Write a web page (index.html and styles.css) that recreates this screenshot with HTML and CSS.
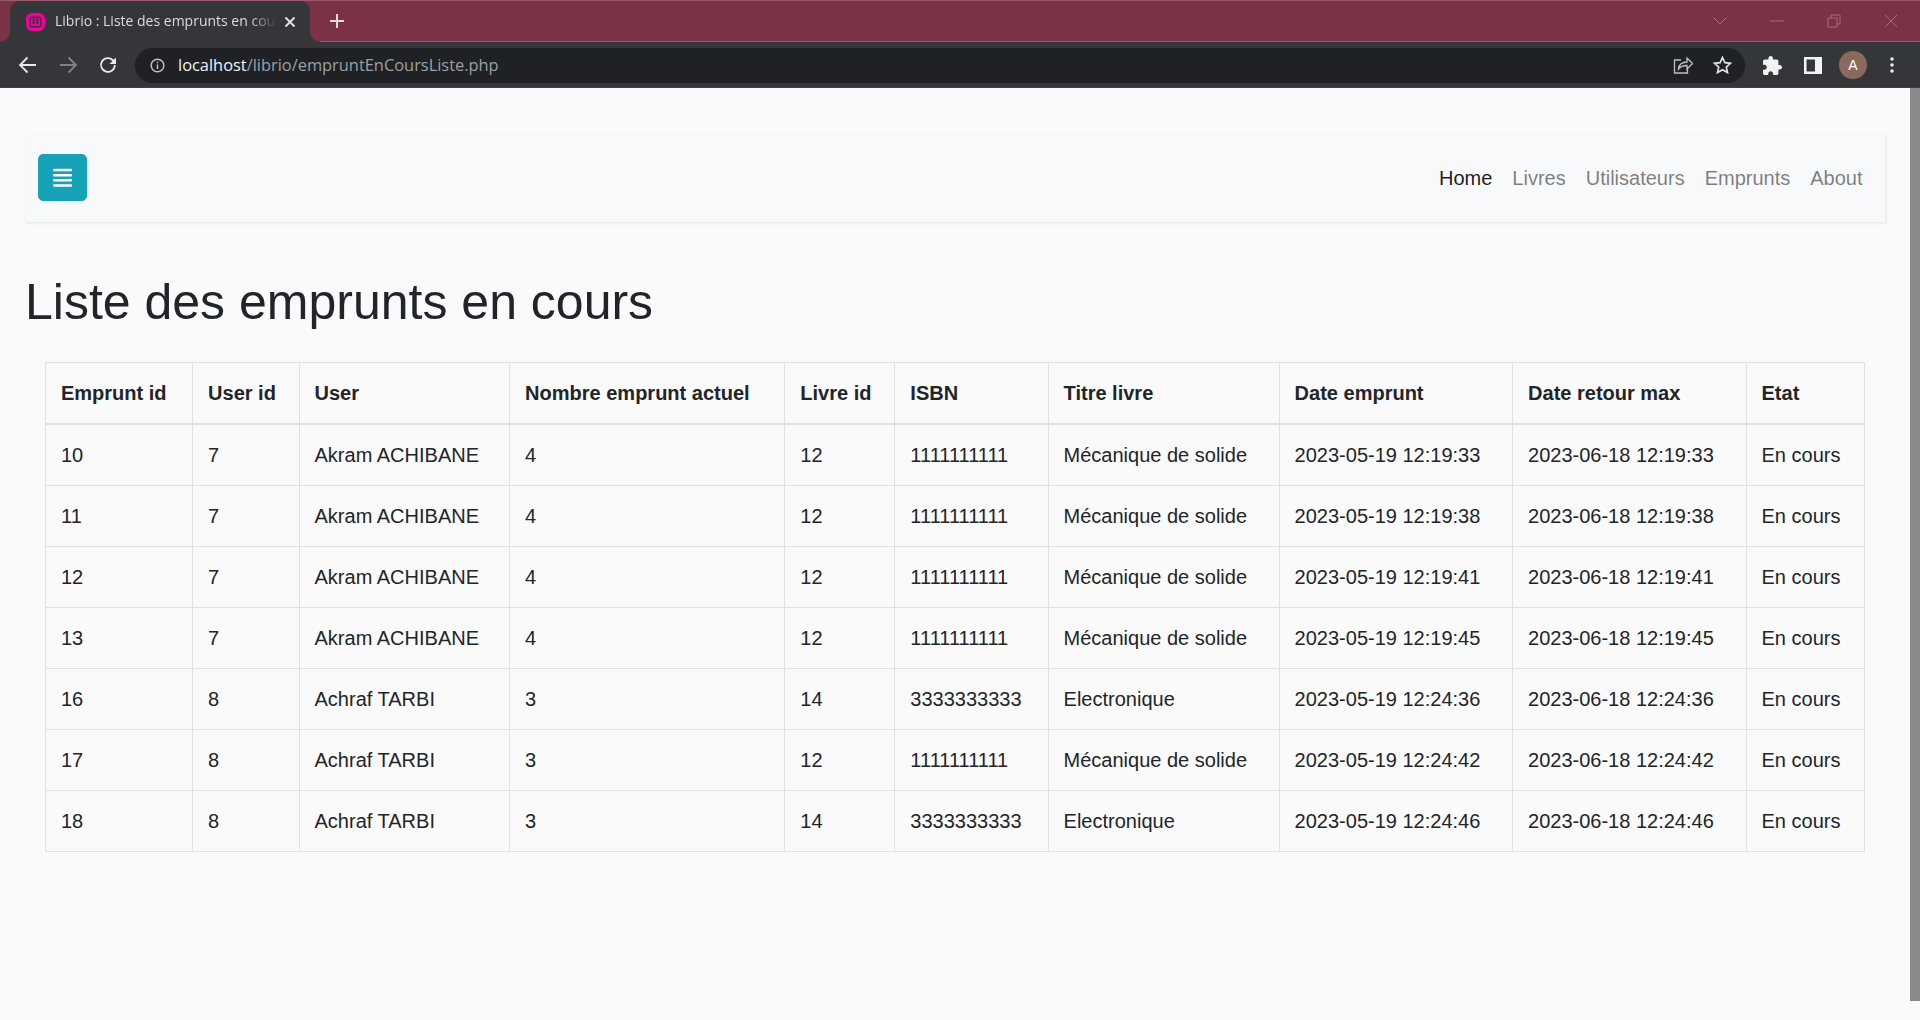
FILE: index.html
```html
<!doctype html>
<html lang="fr">
  <head>
    <meta charset="utf-8">
    <title>Librio : Liste des emprunts en cours</title>
    <link rel="stylesheet" href="styles.css">
  </head>

  <body>
    <div class="browser-top">
      <div class="tabbar">
        <div class="tab">
          <svg class="favicon" width="19" height="18" viewBox="0 0 19 18">
            <rect x="1.7" y="1.7" width="15.6" height="14.6" rx="4.5" fill="none" stroke="#f3009c" stroke-width="3.4"/>
            <path d="M5.8 5v7h7.400V5M9.500 5v7" fill="none" stroke="#f3009c" stroke-width="1.8"/>
          </svg>
          <span class="tab-title">Librio : Liste des emprunts en cou</span>
          <svg class="tab-close" width="12" height="12" viewBox="0 0 12 12">
            <path d="M1.5 1.5l9 9M10.5 1.5l-9 9" stroke="#e3e4e6" stroke-width="1.8"/>
          </svg>
        </div>
        <svg class="new-tab" width="16" height="16" viewBox="0 0 16 16">
          <path d="M8 1v14M1 8h14" stroke="#e8d8dc" stroke-width="2"/>
        </svg>
        <div class="window-controls">
          <svg width="14" height="10" viewBox="0 0 14 10"><path d="M1 2l6 6 6-6" fill="none" stroke="#a66d7d" stroke-width="1"/></svg>
          <svg width="14" height="14" viewBox="0 0 14 14"><path d="M0 7h14" stroke="#a66d7d" stroke-width="1"/></svg>
          <svg width="14" height="14" viewBox="0 0 14 14"><path d="M1 4h9v9H1zM4 4V1h9v9h-3" fill="none" stroke="#a66d7d" stroke-width="1"/></svg>
          <svg width="14" height="14" viewBox="0 0 14 14"><path d="M1 1l12 12M13 1L1 13" stroke="#a66d7d" stroke-width="1"/></svg>
        </div>
      </div>

      <div class="toolbar">
        <svg width="18" height="18" viewBox="0 0 18 18"><path d="M17 9H1.500M8.500 1.500L1 9l7.500 7.500" fill="none" stroke="#e8eaed" stroke-width="1.8"/></svg>
        <svg width="18" height="18" viewBox="0 0 18 18"><path d="M1 9h15.500M9.500 1.500L17 9l-7.500 7.500" fill="none" stroke="#7f8184" stroke-width="1.8"/></svg>
        <svg width="18" height="18" viewBox="0 0 18 18"><path d="M15.800 9a6.900 6.900 0 1 1-2.100-5L16 6.300" fill="none" stroke="#e8eaed" stroke-width="1.8"/><path d="M17 1.500v6.500h-6.500z" fill="#e8eaed"/></svg>
        <div class="urlbar">
          <svg width="15" height="15" viewBox="0 0 15 15">
            <circle cx="7.5" cy="7.5" r="6.3" fill="none" stroke="#bdc1c6" stroke-width="1.5"/>
            <path d="M7.500 6.500v4.500M7.500 3.800v1.500" stroke="#bdc1c6" stroke-width="1.500"/>
          </svg>
          <span class="url"><span class="url-host">localhost</span>/librio/empruntEnCoursListe.php</span>
          <svg class="url-share" width="20" height="18" viewBox="0 0 20 18"><path d="M8 4H1.500v13h13v-4M5.500 13c.5-4 3.500-7 8.500-7V2l5.500 5.500L14 13V9.500c-3.500 0-6.500 1-8.500 3.500z" fill="none" stroke="#bdc1c6" stroke-width="1.300"/></svg>
          <svg width="19" height="18" viewBox="0 0 19 18"><path d="M9.500 1.500l2.400 5.200 5.600.6-4.200 3.800 1.200 5.500-5-2.900-5 2.900 1.200-5.500L1.500 7.300l5.600-.6z" fill="none" stroke="#dfe1e5" stroke-width="1.700"/></svg>
        </div>
        <svg class="tool-puzzle" width="19" height="19" viewBox="2 1 21 21"><path d="M20.500 11H19V7c0-1.100-.9-2-2-2h-4V3.500C13 2.120 11.880 1 10.500 1S8 2.120 8 3.500V5H4c-1.100 0-1.990.9-1.990 2v3.800H3.500c1.490 0 2.700 1.210 2.700 2.700s-1.210 2.700-2.700 2.700H2V20c0 1.100.9 2 2 2h3.800v-1.500c0-1.490 1.210-2.700 2.700-2.700 1.490 0 2.700 1.210 2.700 2.700V22H17c1.100 0 2-.9 2-2v-4h1.500c1.380 0 2.500-1.120 2.500-2.500S21.880 11 20.500 11z" fill="#f1f3f4"/></svg>
        <svg class="tool-panel" width="18" height="17" viewBox="0 0 18 17"><path d="M0 0h18v17H0z" fill="#f1f3f4"/><path d="M2.500 2.500h8.500v12H2.500z" fill="#35363a"/></svg>
        <div class="avatar">A</div>
        <svg class="tool-menu" width="4" height="16" viewBox="0 0 4 16"><circle cx="2" cy="2" r="1.800" fill="#e8eaed"/><circle cx="2" cy="8" r="1.800" fill="#e8eaed"/><circle cx="2" cy="14" r="1.800" fill="#e8eaed"/></svg>
      </div>
    </div>

    <div class="viewport">
      <div class="page">
        <nav class="navbar">
          <button class="menu-btn" type="button">
            <svg width="19" height="19" viewBox="0 0 19 19"><path d="M1 2h17M1 7.200h17M1 12.300h17M1 17.500h17" stroke="#fff" stroke-width="2.400" stroke-linecap="round"/></svg>
          </button>
          <ul class="nav-links">
            <li><a class="active" href="#">Home</a></li>
            <li><a href="#">Livres</a></li>
            <li><a href="#">Utilisateurs</a></li>
            <li><a href="#">Emprunts</a></li>
            <li><a href="#">About</a></li>
          </ul>
        </nav>

        <h2 class="page-title">Liste des emprunts en cours</h2>

        <table class="loans">
          <thead>
            <tr>
              <th>Emprunt id</th>
              <th>User id</th>
              <th>User</th>
              <th>Nombre emprunt actuel</th>
              <th>Livre id</th>
              <th>ISBN</th>
              <th>Titre livre</th>
              <th>Date emprunt</th>
              <th>Date retour max</th>
              <th>Etat</th>
            </tr>
          </thead>
          <tbody>
            <tr><td>10</td><td>7</td><td>Akram ACHIBANE</td><td>4</td><td>12</td><td>1111111111</td><td>Mécanique de solide</td><td>2023-05-19 12:19:33</td><td>2023-06-18 12:19:33</td><td>En cours</td></tr>
            <tr><td>11</td><td>7</td><td>Akram ACHIBANE</td><td>4</td><td>12</td><td>1111111111</td><td>Mécanique de solide</td><td>2023-05-19 12:19:38</td><td>2023-06-18 12:19:38</td><td>En cours</td></tr>
            <tr><td>12</td><td>7</td><td>Akram ACHIBANE</td><td>4</td><td>12</td><td>1111111111</td><td>Mécanique de solide</td><td>2023-05-19 12:19:41</td><td>2023-06-18 12:19:41</td><td>En cours</td></tr>
            <tr><td>13</td><td>7</td><td>Akram ACHIBANE</td><td>4</td><td>12</td><td>1111111111</td><td>Mécanique de solide</td><td>2023-05-19 12:19:45</td><td>2023-06-18 12:19:45</td><td>En cours</td></tr>
            <tr><td>16</td><td>8</td><td>Achraf TARBI</td><td>3</td><td>14</td><td>3333333333</td><td>Electronique</td><td>2023-05-19 12:24:36</td><td>2023-06-18 12:24:36</td><td>En cours</td></tr>
            <tr><td>17</td><td>8</td><td>Achraf TARBI</td><td>3</td><td>12</td><td>1111111111</td><td>Mécanique de solide</td><td>2023-05-19 12:24:42</td><td>2023-06-18 12:24:42</td><td>En cours</td></tr>
            <tr><td>18</td><td>8</td><td>Achraf TARBI</td><td>3</td><td>14</td><td>3333333333</td><td>Electronique</td><td>2023-05-19 12:24:46</td><td>2023-06-18 12:24:46</td><td>En cours</td></tr>
          </tbody>
        </table>
      </div>
      <div class="scrollbar">
        <div class="scrollbar-thumb"></div>
      </div>
    </div>
  </body>
</html>
```

FILE: styles.css
```css
* {
  box-sizing: border-box;
}

html,
body {
  height: 100%;
}

body {
  margin: 0;
  display: flex;
  flex-direction: column;
  overflow: hidden;
  background: #fafafa;
  color: #212529;
  font-family: "Liberation Sans", Arial, sans-serif;
  font-size: 20px;
  line-height: 1.5;
}

/* browser frame */
.browser-top {
  flex: none;
}

.tabbar {
  display: flex;
  align-items: center;
  height: 42px;
  padding-left: 10px;
  background: #7b3146;
  border-top: 1px solid #9a5a6c;
  border-bottom: 1px solid #a0606f;
}

.tab {
  position: relative;
  display: flex;
  align-items: center;
  align-self: stretch;
  width: 300px;
  margin-bottom: -1px;
  padding: 0 14px 0 16px;
  background: #35363a;
  border-radius: 10px 10px 0 0;
}

.tab::before,
.tab::after {
  content: "";
  position: absolute;
  bottom: 0;
  width: 10px;
  height: 10px;
  background: #7b3146;
}

.tab::before {
  left: -10px;
  border-bottom-right-radius: 10px;
  box-shadow: 3px 3px 0 3px #35363a;
}

.tab::after {
  right: -10px;
  border-bottom-left-radius: 10px;
  box-shadow: -3px 3px 0 3px #35363a;
}

.favicon {
  flex: none;
}

.tab-title {
  flex: 1;
  margin-left: 10px;
  padding-bottom: 2px;
  white-space: nowrap;
  color: #dadce0;
  font-family: "Open Sans", sans-serif;
  font-size: 14px;
  -webkit-mask-image: linear-gradient(to right, #000 88%, transparent 100%);
  mask-image: linear-gradient(to right, #000 88%, transparent 100%);
}

.tab-close {
  flex: none;
  margin-left: 8px;
}

.new-tab {
  margin-left: 19px;
}

.window-controls {
  display: flex;
  align-items: center;
  gap: 43px;
  margin-left: auto;
  padding-right: 22px;
}

.toolbar {
  display: flex;
  align-items: center;
  height: 46px;
  padding-left: 19px;
  padding-top: 1px;
  background: #35363a;
  border-bottom: 1px solid #3e3f43;
}

.toolbar > svg + svg {
  margin-left: 22px;
}

.urlbar {
  display: flex;
  align-items: center;
  width: 1610px;
  height: 35px;
  margin-left: 18px;
  padding: 0 13px 0 15px;
  background: #202124;
  border-radius: 18px;
}

.url {
  flex: 1;
  margin-left: 13px;
  color: #9aa0a6;
  font-family: "Open Sans", sans-serif;
  font-size: 16.4px;
  white-space: nowrap;
}

.url-host {
  color: #f1f3f4;
}

.url-share {
  margin-right: 20px;
}

.toolbar > .tool-puzzle {
  margin-left: 18px;
}

.avatar {
  display: flex;
  align-items: center;
  justify-content: center;
  width: 28px;
  height: 28px;
  margin-left: 17px;
  border-radius: 50%;
  background: #8b6a5e;
  color: #fff;
  font-size: 14px;
}

.tool-menu {
  margin-left: 23px;
}

/* page */
.viewport {
  flex: 1;
  display: flex;
  min-height: 0;
}

.page {
  flex: 1;
  min-width: 0;
  padding: 46px 25px 0;
}

.scrollbar {
  flex: none;
  width: 10px;
  padding-bottom: 19px;
}

.scrollbar-thumb {
  height: 100%;
  background: #8a8a8a;
}

.navbar {
  display: flex;
  align-items: center;
  justify-content: space-between;
  height: 88px;
  padding: 20px 12.5px 21px;
  background: #f8f9fa;
  box-shadow: 1px 1px 3px rgba(0, 0, 0, 0.1);
}

.menu-btn {
  display: flex;
  align-items: center;
  justify-content: center;
  width: 49px;
  height: 47px;
  padding: 0;
  background: #17a2b8;
  border: 1px solid #17a2b8;
  border-radius: 5px;
}

.nav-links {
  display: flex;
  margin: 0;
  padding: 0;
  list-style: none;
}

.nav-links a {
  display: block;
  padding: 10px;
  color: rgba(0, 0, 0, 0.5);
  text-decoration: none;
}

.nav-links a.active {
  color: rgba(0, 0, 0, 0.9);
}

.page-title {
  margin: 50px 0 30px;
  font-size: 50px;
  font-weight: 500;
  line-height: 1.2;
}

.loans {
  width: 1820px;
  margin: 0 20px;
  border-collapse: collapse;
}

.loans th,
.loans td {
  padding: 15px;
  border: 1px solid #dee2e6;
  text-align: left;
  white-space: nowrap;
}

.loans th {
  border-bottom-width: 2px;
  font-weight: 700;
}
```
